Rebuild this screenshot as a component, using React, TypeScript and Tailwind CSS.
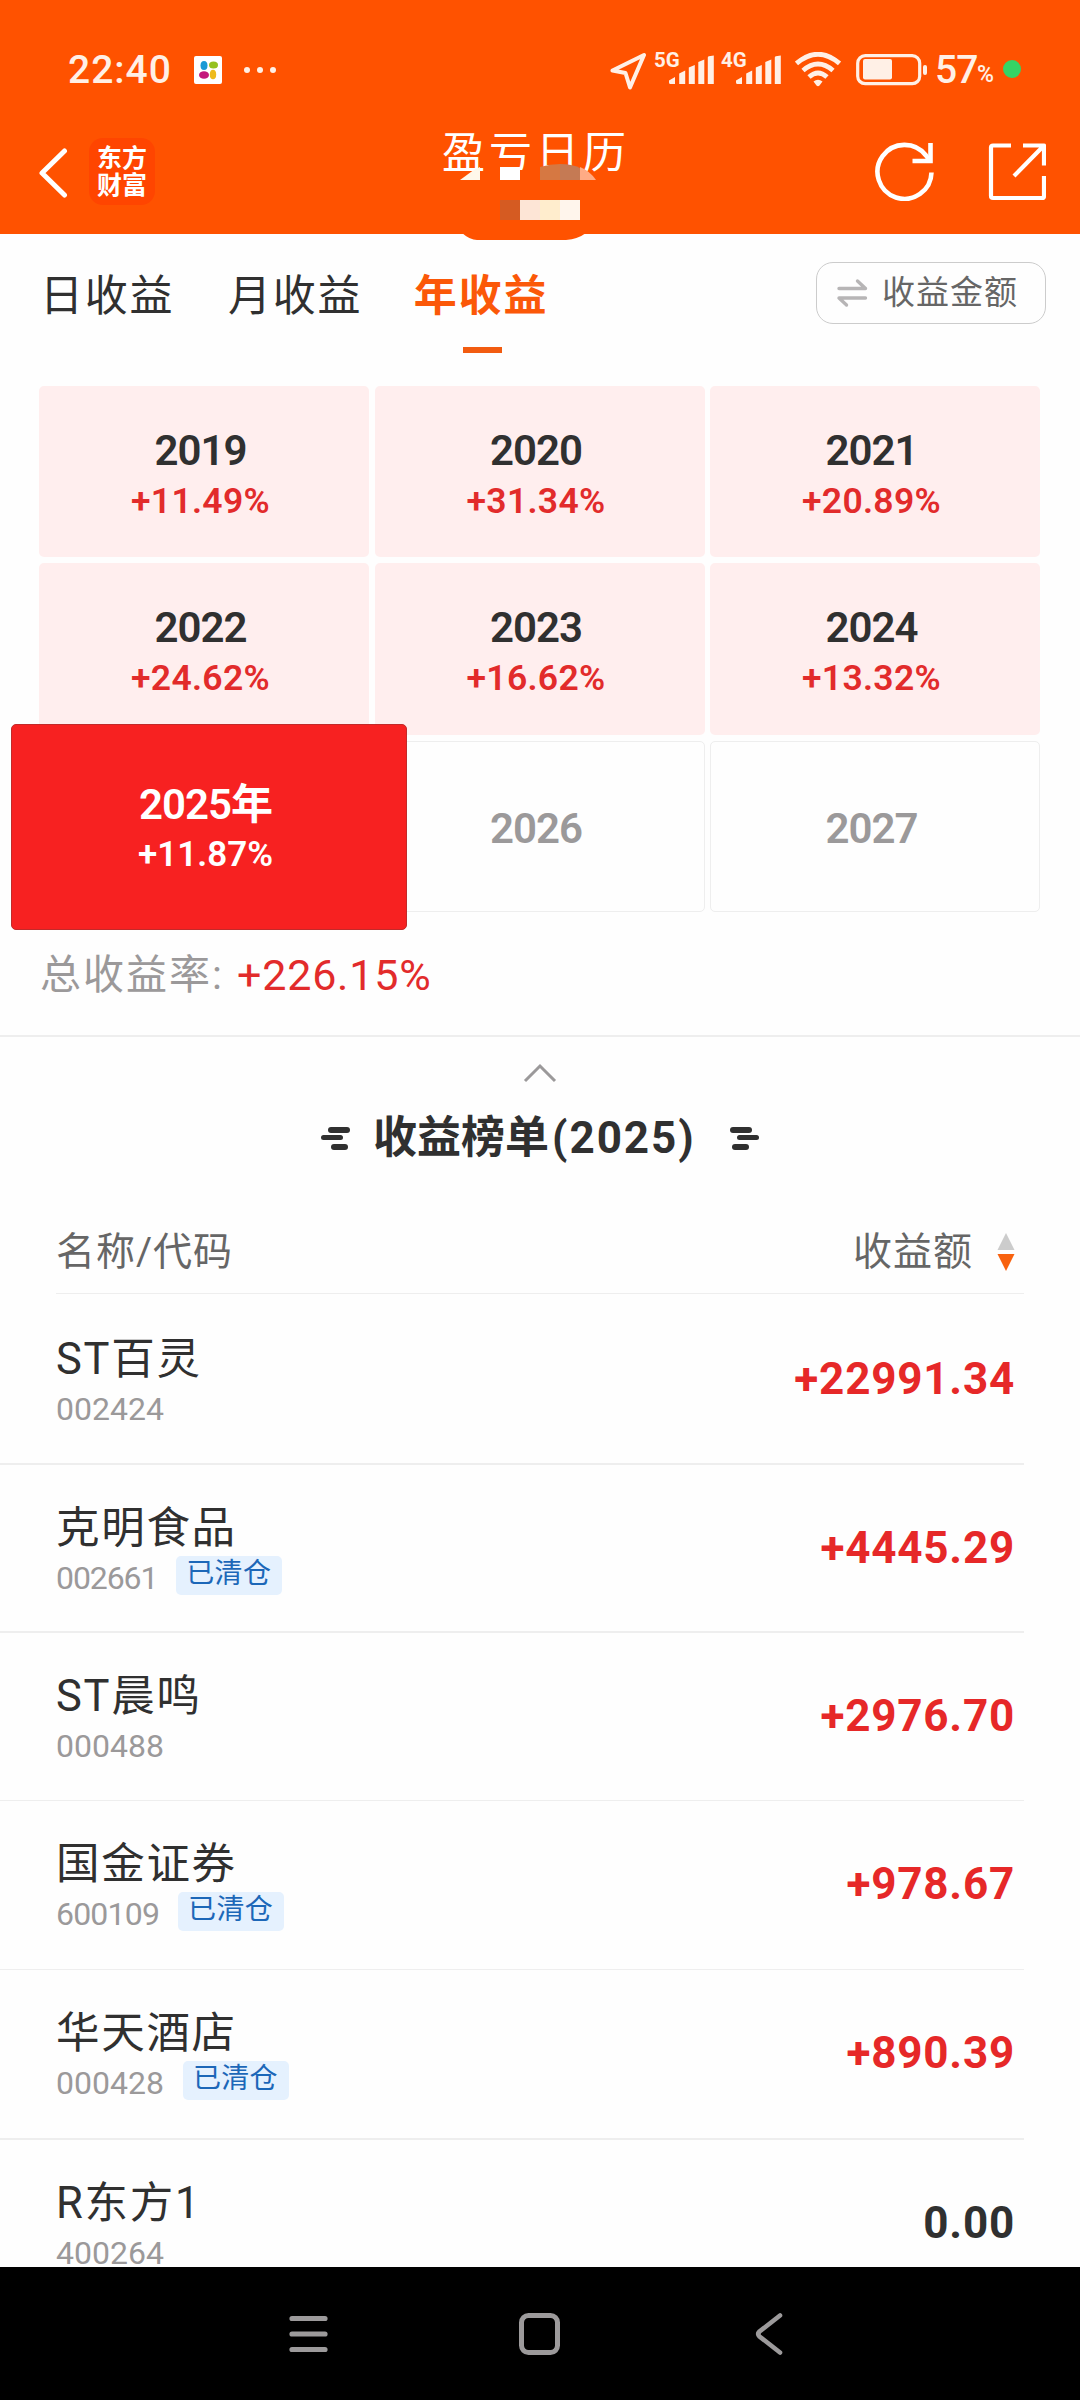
import clsx from 'clsx';

type Year = { year: string; rate?: string; active?: boolean };

const years: Year[] = [
  { year: '2019', rate: '+11.49%' },
  { year: '2020', rate: '+31.34%' },
  { year: '2021', rate: '+20.89%' },
  { year: '2022', rate: '+24.62%' },
  { year: '2023', rate: '+16.62%' },
  { year: '2024', rate: '+13.32%' },
  { year: '2025', rate: '+11.87%', active: true },
  { year: '2026' },
  { year: '2027' },
];

type Stock = {
  name: string;
  code: string;
  amount: string;
  cleared?: boolean;
  row: string;
  codeClass?: string;
};

const stocks: Stock[] = [
  { name: 'ST百灵', code: '002424', amount: '+22991.34', row: 'h-[171px] pt-[2px] border-b-2' },
  { name: '克明食品', code: '002661', amount: '+4445.29', cleared: true, row: 'h-[168px] border-b-2', codeClass: 'tracking-[-1.1px]' },
  { name: 'ST晨鸣', code: '000488', amount: '+2976.70', row: 'h-[168px] border-b' },
  { name: '国金证券', code: '600109', amount: '+978.67', cleared: true, row: 'h-[169px] border-b', codeClass: 'tracking-[-0.8px]' },
  { name: '华天酒店', code: '000428', amount: '+890.39', cleared: true, row: 'h-[170px] border-b-2' },
  { name: 'R东方1', code: '400264', amount: '0.00', row: 'h-[168px]' },
];

const Signal = ({ label }: { label: string }) => (
  <div className="flex h-[34px] items-start">
    <span className="w-[15px] text-[20.5px] leading-[16px] font-bold whitespace-nowrap">{label}</span>
    <svg width="46" height="34" viewBox="0 0 46 34" fill="currentColor">
      <path d="M0 28.5l6-3.500v7H1.500Q0 32 0 30.500zM10.200 21.500l6-3v13.500h-6zM19.800 15.500l6-2.500v19h-6zM29.300 10l6-2.500v24.500h-6zM38.800 5.500q0-1 1-1.300l5-.7v28.500h-6z" />
    </svg>
  </div>
);

const StatusBar = () => (
  <div className="flex h-[134px] items-start justify-between pt-[52px] text-[#fff0e6]">
    <div className="flex h-9 items-center pl-[68px]">
      <span className="w-[126px] text-[39px] leading-9 font-medium tracking-[1px]">22:40</span>
      <svg width="28" height="28" viewBox="0 0 28 28">
        <rect width="28" height="28" rx="2" fill="#fff" />
        <ellipse cx="10" cy="9.500" rx="3.500" ry="4.500" fill="#1a9ad6" />
        <ellipse cx="19.500" cy="9" rx="4.500" ry="3.500" fill="#95c11f" />
        <ellipse cx="10" cy="19" rx="5" ry="3.800" fill="#c4177c" />
        <ellipse cx="19" cy="18.500" rx="3.200" ry="4.700" fill="#eebb1c" />
      </svg>
      <div className="ml-[22px] flex gap-[7px]">
        <i className="size-1.5 rounded-full bg-current" />
        <i className="size-1.5 rounded-full bg-current" />
        <i className="size-1.5 rounded-full bg-current" />
      </div>
    </div>
    <div className="flex w-[472px] items-start">
      <svg width="44" height="38" viewBox="0 0 44 38" fill="none" stroke="currentColor" strokeWidth="4" strokeLinejoin="round">
        <path d="M4.500 18.500L36 3 22 35.500 17.500 21z" />
      </svg>
      <div className="w-[67px] pl-[2px]">
        <Signal label="5G" />
      </div>
      <div className="w-[76px] pl-[2px]">
        <Signal label="4G" />
      </div>
      <svg width="46" height="36" viewBox="0 0 46 36" fill="none" stroke="currentColor" strokeWidth="4.800">
        <path d="M1.500 11.500Q23-7 44.500 11.500M8 18.500Q23 5.500 38 18.500M14 25Q23 17 32 25" />
        <path d="M18.500 29.500Q23 26 27.500 29.500L24.500 33.500Q23 35 21.500 33.500Z" fill="currentColor" stroke="none" />
      </svg>
      <svg className="ml-[15px]" width="72" height="34" viewBox="0 0 72 34">
        <rect x="1.700" y="3.700" width="62" height="28" rx="7.500" fill="none" stroke="currentColor" strokeWidth="3.200" />
        <rect x="7" y="7" width="29" height="20.500" rx="2" fill="currentColor" />
        <rect x="67" y="13" width="4" height="10" rx="2" fill="currentColor" />
      </svg>
      <div className="ml-[7px] flex h-9 items-center">
        <span className="w-[42px] text-[39px] leading-9 font-medium tracking-[-1px]">57</span>
        <span className="w-[26px] pt-[9px] text-[23px] leading-6 font-medium">%</span>
      </div>
      <i className="mt-[8px] size-[18px] rounded-full bg-[#35d465]" />
    </div>
  </div>
);

const TitleBar = () => (
  <div className="relative flex h-[100px] justify-between">
    <div className="flex items-start pl-[38px]">
      <svg className="mt-[14px]" width="32" height="50" viewBox="0 0 32 50" fill="none" stroke="#fff" strokeWidth="5" strokeLinecap="round" strokeLinejoin="round">
        <path d="M26.500 3L4 25l22.500 22" />
      </svg>
      <div className="mt-1 ml-[19px] flex h-[67px] w-[66px] flex-col items-center justify-center rounded-[14px] bg-[#ff4500] text-[25px] leading-[27px] font-bold text-white">
        <span>东方</span>
        <span>财富</span>
      </div>
    </div>
    <h1 className="absolute top-0 left-[442px] text-[43px] leading-[39px] tracking-[4px] text-white">盈亏日历</h1>
    {/* pixelated avatar that hangs over the title and the bar's lower edge */}
    <svg className="absolute top-[30px] left-[440px]" width="170" height="76" viewBox="0 0 170 76">
      <path d="M60 6h80v10H60z" fill="#ff5200" />
      <path d="M20 16L33 6.500 40 3v13z" fill="#fff8ea" />
      <path d="M60 3h20v13H60z" fill="#fff" />
      <path d="M100 3q10-3 20-3v16h-20z" fill="#d67842" />
      <path d="M120 0q12 0 20 4v12h-20z" fill="#c57a54" />
      <path d="M140 3q10 4 16 13h-16z" fill="#ffab85" />
      <path d="M60 36h20v20H60z" fill="#d55b22" />
      <path d="M80 36h20v20H80z" fill="#fde5d6" />
      <path d="M100 36h20v20h-20z" fill="#ffedcd" />
      <path d="M120 36h20v20h-20z" fill="#fff5ec" />
      <path d="M22 69h124q-8 6-20 7H37q-7 0-15-7z" fill="#ff5200" />
    </svg>
    <div className="flex items-start gap-[53px] pr-[34px] pt-[7px]">
      <svg width="60" height="60" viewBox="0 0 60 60" fill="none" stroke="#fff" strokeWidth="4.600">
        <path d="M56.500 31.500A27 27 0 1 1 51 14.500L53.500 18" />
        <path d="M55.500 2v18H37.500" />
      </svg>
      <svg width="58" height="60" viewBox="0 0 58 60" fill="none" stroke="#fff" strokeWidth="4.200" strokeLinejoin="round">
        <path d="M23 4.500H5Q3 4.500 3 6.500V55Q3 57 5 57H54Q56 57 56 55V35" />
        <path d="M35 4.500H56V24.500M56 4.500L26 35" />
      </svg>
    </div>
  </div>
);

const Tabs = () => (
  <div className="flex h-[152px] shrink-0 items-start justify-between pr-[34px] pl-[40px] pt-[28px] text-[43px] leading-[68px] tracking-[1.800px] text-[#303030]">
    <div className="flex">
      <span className="w-[188px]">日收益</span>
      <span className="w-[184px]">月收益</span>
      <div className="flex w-[138px] flex-col items-center font-bold text-[#fb5808]">
        <span>年收益</span>
        <i className="mt-[17px] ml-[3px] h-1.5 w-[39px] bg-[#f25c10]" />
      </div>
    </div>
    <button className="flex h-[62px] w-[230px] items-center rounded-[17px] border border-[#ccc] pl-[19px] text-[33px] leading-[62px] tracking-[1px] text-[#666]">
      <svg className="mr-[14px]" width="32" height="30" viewBox="0 0 32 30" fill="none" stroke="#b7b5b6" strokeWidth="3.400" strokeLinecap="round" strokeLinejoin="round">
        <path d="M3 10.500H29.500L21.500 3M29.500 20H3L10.500 27" />
      </svg>
      收益金额
    </button>
  </div>
);

const YearCell = ({ year, rate, active }: Year) => {
  if (active) {
    return (
      <div className="relative">
        {/* enlarged selected cell, spills over its neighbours */}
        <div className="absolute -top-[17px] -left-[28px] z-10 flex h-[206px] w-[396px] flex-col items-center justify-center rounded-[5px] border border-[#c22a2a] bg-[#f72121] pt-[6px] pr-[7px] text-white">
          <span className="text-[42px] leading-[50px] font-semibold tracking-[-1px]">{year}年</span>
          <span className="text-[35px] leading-[50px] font-semibold">{rate}</span>
        </div>
      </div>
    );
  }
  return (
    <div
      className={clsx(
        'flex flex-col items-center justify-center rounded-[5px] pr-[7px]',
        rate ? 'bg-[#ffeeee] pt-[9px] text-[#303030]' : 'border border-[#eee] pt-[5px] text-[#9b999a]'
      )}
    >
      <span className="text-[42px] leading-[50px] font-semibold tracking-[-1px]">{year}</span>
      {rate && (
        <span className="text-[35.5px] leading-[50px] font-semibold tracking-[0.300px] text-[#e22b2b]">{rate}</span>
      )}
    </div>
  );
};

const Dashes = ({ className }: { className?: string }) => (
  <div className={clsx('flex w-[38px] flex-col', className)}>
    <i className="ml-[7px] h-1.5 w-[22px] rounded-full bg-[#303030]" />
    <i className="mt-[2px] h-[5px] w-[22px] rounded-full bg-[#303030]" />
    <i className="mt-1 ml-[10px] h-1.5 w-[17px] rounded-full bg-[#303030]" />
  </div>
);

const StockRow = ({ name, code, amount, cleared, row, codeClass }: Stock) => (
  <div className={clsx('mr-[56px] flex shrink-0 justify-between border-[#eee] pr-[9px] pl-[56px]', row)}>
    <div className="pt-[36px]">
      <p className="h-[55px] text-[43.5px] leading-[55px] tracking-[1.700px] text-[#303030]">{name}</p>
      <div className="flex h-[39px] items-center">
        <span className={clsx('pt-[4px] text-[32px] leading-9 text-[#9b999a]', codeClass)}>{code}</span>
        {cleared && (
          <span className="ml-[19px] h-[39px] w-[106px] rounded-[5px] bg-[#e5f1fe] pl-[10px] text-[28px] leading-[36px] tracking-[0.300px] text-[#1c67b8]">
            已清仓
          </span>
        )}
      </div>
    </div>
    <span
      className={clsx(
        'pt-[57px] text-[44px] leading-[52px] font-bold tracking-[0.800px]',
        amount.startsWith('+') ? 'text-[#e62828]' : 'text-[#303030]'
      )}
    >
      {amount}
    </span>
  </div>
);

const App = () => (
  <div className="flex h-[2400px] w-[1080px] flex-col overflow-hidden bg-[#fefefe] font-[Roboto,'Noto_Sans_CJK_SC',sans-serif]">
    <header className="z-10 h-[234px] shrink-0 bg-[#ff5200]">
      <StatusBar />
      <TitleBar />
    </header>

    <main className="flex h-[2033px] shrink-0 flex-col overflow-hidden">
      <Tabs />
      <div className="mx-[39px] grid h-[526px] w-[1001px] shrink-0 grid-cols-3 grid-rows-3 gap-x-[5.500px] gap-y-[6px]">
        {years.map((y) => (
          <YearCell key={y.year} {...y} />
        ))}
      </div>
      <div className="flex h-[125px] shrink-0 border-b-2 border-[#eee] pl-[40px] pt-[37px] text-[41px] leading-[52px]">
        <span className="w-[197px] tracking-[2px] text-[#9b999a]">总收益率:</span>
        <span className="text-[43px] tracking-[0.800px] text-[#e22b2b]">+226.15%</span>
      </div>

      <div className="flex shrink-0 justify-center pt-[26px]">
        <svg width="34" height="20" viewBox="0 0 34 20" fill="none" stroke="#9b999a" strokeWidth="3">
          <path d="M2 18L17 3l15 15" />
        </svg>
      </div>
      <div className="flex h-[64px] shrink-0 items-center justify-center pt-[46px] text-[44px] leading-[60px] font-bold text-[#303030]">
        <Dashes />
        <h2 className="w-[362px] pl-[14px] whitespace-nowrap">
          收益榜单<span className="ml-[3px] tracking-[2px]">(2025)</span>
        </h2>
        <Dashes className="-scale-x-100" />
      </div>

      <div className="mt-[47px] mr-[56px] ml-[56px] flex h-[100px] shrink-0 items-end justify-between border-b border-[#eee] pr-[9px] pb-[16px] text-[39px] leading-[50px] tracking-[1px] text-[#666]">
        <span>名称/代码</span>
        <div className="flex items-center">
          收益额
          <svg className="ml-[24px]" width="18" height="38" viewBox="0 0 18 38">
            <path d="M9 0l8.500 17H.5z" fill="#ccc" />
            <path d="M.5 21h17L9 38z" fill="#f8620f" />
          </svg>
        </div>
      </div>
      {stocks.map((s) => (
        <StockRow key={s.code} {...s} />
      ))}
    </main>

    <nav className="flex h-[133px] shrink-0 items-center justify-center gap-[186px] bg-black">
      <svg width="44" height="44" viewBox="0 0 44 44" stroke="#9c9a9b" strokeWidth="5.200" strokeLinecap="round">
        <path d="M4 6.500H37M4 22H37M4 37.500H37" />
      </svg>
      <svg width="44" height="44" viewBox="0 0 44 44" fill="none" stroke="#9c9a9b" strokeWidth="5">
        <rect x="3.500" y="3.500" width="36" height="37" rx="7" />
      </svg>
      <svg width="44" height="44" viewBox="0 0 44 44" fill="none" stroke="#9c9a9b" strokeWidth="4.600" strokeLinecap="round">
        <path d="M32 3.500L11.500 19.500Q9 22 11.500 24.500L32 40.500" />
      </svg>
    </nav>
  </div>
);

export default App;
